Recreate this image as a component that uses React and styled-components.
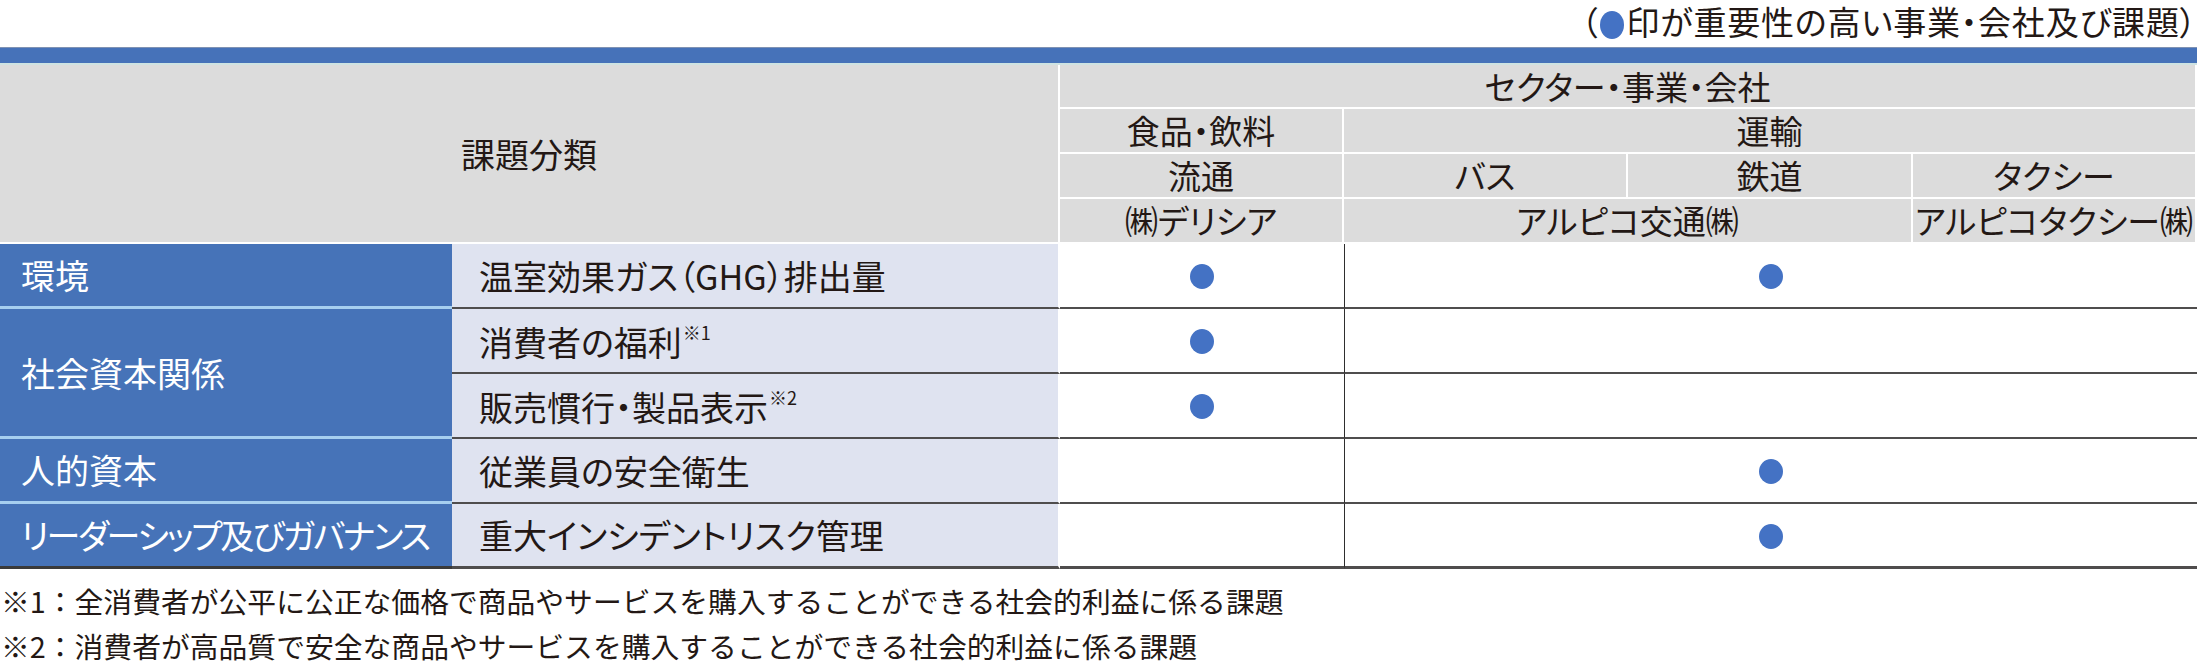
import React from 'react';
import styled, { createGlobalStyle } from 'styled-components';

const GlobalStyle = createGlobalStyle`
  body {
    margin: 0;
    background: #fff;
    font-family: "Noto Sans CJK JP", "Noto Sans", sans-serif;
    color: #231815;
  }
`;

const Page = styled.div`
  width: 2200px;
`;

const Legend = styled.div`
  text-align: right;
  font-size: 33px;
  line-height: 42px;
  letter-spacing: 0.8px;
  padding-right: 3px;
  font-feature-settings: "palt";
`;

const LegendDot = styled.span`
  display: inline-block;
  width: 24px;
  height: 28px;
  border-radius: 50%;
  background: #4472c4;
  vertical-align: -4px;
  margin: 0 2px;
`;

const TopRule = styled.div`
  width: 2197px;
  margin-top: 5px;
  height: 15px;
  background: #4672b9;
  border-top: 1px solid #7f92b3;
  border-bottom: 2px solid #cfe3e2;
`;

const Table = styled.table`
  width: 2197px;
  table-layout: fixed;
  border-collapse: separate;
  border-spacing: 0;
  font-feature-settings: "palt";
`;

const HeadRow = styled.tr`
  height: ${(p) => p.$h}px;
`;

const HeadCell = styled.th`
  background: #dcdcdc;
  border-right: 2px solid #fff;
  border-bottom: 2px solid #fff;
  font-size: ${(p) => (p.$big ? 34 : 33)}px;
  font-weight: 400;
  line-height: 1;
  padding: 0;
  text-align: center;
  vertical-align: middle;
  white-space: nowrap;
`;

const BodyRow = styled.tr`
  height: 65px;
`;

const CategoryCell = styled.td`
  background: #4673b8;
  color: #fff;
  font-size: 34px;
  line-height: 1;
  letter-spacing: ${(p) => (p.$tight ? '-2.2px' : '0')};
  padding: 0 0 0 21px;
  border-bottom: ${(p) => (p.$last ? '3px solid #3a3a3a' : '3px solid #a6cff0')};
  white-space: nowrap;
`;

const IssueCell = styled.td`
  background: #dfe3f0;
  font-size: 34px;
  line-height: 1;
  padding: 0 0 0 27px;
  border-bottom: ${(p) => (p.$last ? '3px' : '2px')} solid #4f4d4d;
  border-right: 2px solid #fff;
  white-space: nowrap;
`;

const Sup = styled.span`
  font-size: 18px;
  vertical-align: 16px;
  margin-left: 1px;
`;

const MarkCell = styled.td`
  text-align: center;
  vertical-align: middle;
  padding: 0;
  border-bottom: ${(p) => (p.$last ? '3px' : '2px')} solid #4f4d4d;
  border-left: ${(p) => (p.$divider ? '1px solid #2e2e2e' : 'none')};
`;

const Dot = styled.span`
  display: inline-block;
  width: 24px;
  height: 25px;
  border-radius: 50%;
  background: #4472c4;
  vertical-align: middle;
`;

const Notes = styled.div`
  margin-top: 9px;
  font-size: 28.8px;
  line-height: 45px;
  padding-left: 1px;
`;

const rows = [
  { category: '環境', span: 1, issue: '温室効果ガス（GHG）排出量', food: true, transit: true },
  { category: '社会資本関係', span: 2, issue: '消費者の福利', note: '※1', food: true, transit: false },
  { issue: '販売慣行・製品表示', note: '※2', food: true, transit: false },
  { category: '人的資本', span: 1, issue: '従業員の安全衛生', food: false, transit: true },
  { category: 'リーダーシップ及びガバナンス', span: 1, tight: true, issue: '重大インシデントリスク管理', food: false, transit: true },
];

const App = () => {
  return (
    <Page>
      <GlobalStyle />
      <Legend>
        （<LegendDot />印が重要性の高い事業・会社及び課題）
      </Legend>
      <TopRule />
      <Table>
        <colgroup>
          <col style={{ width: 452 }} />
          <col style={{ width: 608 }} />
          <col style={{ width: 284 }} />
          <col style={{ width: 284 }} />
          <col style={{ width: 285 }} />
          <col style={{ width: 284 }} />
        </colgroup>
        <thead>
          <HeadRow $h={44}>
            <HeadCell colSpan={2} rowSpan={4} $big>課題分類</HeadCell>
            <HeadCell colSpan={4}>セクター・事業・会社</HeadCell>
          </HeadRow>
          <HeadRow $h={45}>
            <HeadCell>食品・飲料</HeadCell>
            <HeadCell colSpan={3}>運輸</HeadCell>
          </HeadRow>
          <HeadRow $h={45}>
            <HeadCell>流通</HeadCell>
            <HeadCell>バス</HeadCell>
            <HeadCell>鉄道</HeadCell>
            <HeadCell>タクシー</HeadCell>
          </HeadRow>
          <HeadRow $h={45}>
            <HeadCell>㈱デリシア</HeadCell>
            <HeadCell colSpan={2}>アルピコ交通㈱</HeadCell>
            <HeadCell>アルピコタクシー㈱</HeadCell>
          </HeadRow>
        </thead>
        <tbody>
          {rows.map((r, i) => {
            const last = i === rows.length - 1;
            return (
              <BodyRow key={r.issue}>
                {r.category && (
                  <CategoryCell rowSpan={r.span} $last={last} $tight={r.tight}>
                    {r.category}
                  </CategoryCell>
                )}
                <IssueCell $last={last}>
                  {r.issue}
                  {r.note && <Sup>{r.note}</Sup>}
                </IssueCell>
                <MarkCell $last={last}>{r.food && <Dot />}</MarkCell>
                <MarkCell colSpan={3} $divider $last={last}>
                  {r.transit && <Dot />}
                </MarkCell>
              </BodyRow>
            );
          })}
        </tbody>
      </Table>
      <Notes>
        <div>※1：全消費者が公平に公正な価格で商品やサービスを購入することができる社会的利益に係る課題</div>
        <div>※2：消費者が高品質で安全な商品やサービスを購入することができる社会的利益に係る課題</div>
      </Notes>
    </Page>
  );
};

export default App;
